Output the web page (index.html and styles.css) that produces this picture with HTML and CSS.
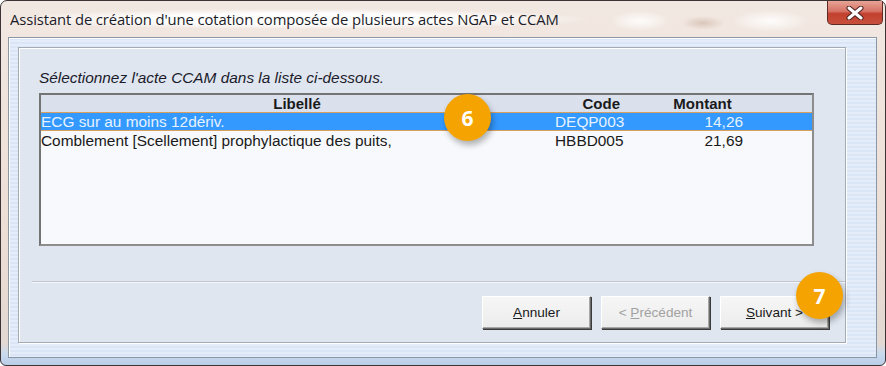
FILE: index.html
```html
<!DOCTYPE html>
<html lang="fr">
<head>
    <meta charset="UTF-8">
    <title>Assistant de création d'une cotation</title>
    <link rel="stylesheet" href="styles.css">
</head>
<body>
    <div class="window">
        <div class="titlebar">
            <span class="title">Assistant de création d'une cotation composée de plusieurs actes NGAP et CCAM</span>
            <div class="close">
                <svg width="20" height="14" viewBox="0 0 20 14">
                    <path d="M4 2 L16 12 M16 2 L4 12" stroke="#4a2020" stroke-width="5" stroke-linecap="round"/>
                    <path d="M4 2 L16 12 M16 2 L4 12" stroke="#ffffff" stroke-width="3" stroke-linecap="round"/>
                </svg>
            </div>
        </div>
        <div class="client">
            <div class="panel">
                <p class="prompt">Sélectionnez l'acte CCAM dans la liste ci-dessous.</p>
                <div class="list">
                    <div class="row header">
                        <span class="c-label">Libellé</span>
                        <span class="c-code">Code</span>
                        <span class="c-amount">Montant</span>
                    </div>
                    <div class="row selected">
                        <span class="c-label">ECG sur au moins 12dériv.</span>
                        <span class="c-code">DEQP003</span>
                        <span class="c-amount">14,26</span>
                    </div>
                    <div class="row">
                        <span class="c-label">Comblement [Scellement] prophylactique des puits,</span>
                        <span class="c-code">HBBD005</span>
                        <span class="c-amount">21,69</span>
                    </div>
                </div>
                <div class="separator"></div>
                <div class="buttons">
                    <div class="btn"><span><u>A</u>nnuler</span></div>
                    <div class="btn disabled"><span>&lt; <u>P</u>récédent</span></div>
                    <div class="btn"><span><u>S</u>uivant &gt;</span></div>
                </div>
            </div>
        </div>
        <div class="badge badge-6">6</div>
        <div class="badge badge-7">7</div>
    </div>
</body>
</html>
```

FILE: styles.css
```css
body {
    margin: 0;
    width: 886px;
    height: 366px;
    overflow: hidden;
    background: #ffffff;
    font-family: "Liberation Sans", Arial, sans-serif;
}
.window {
    position: relative;
    box-sizing: border-box;
    width: 886px;
    height: 366px;
    border: 1px solid #3c3434;
    border-radius: 7px 7px 6px 6px;
    padding: 0 8px 8px 7px;
    background: linear-gradient(to bottom, #f2e8e2 0%, #ecdfd6 60%, #e3d8d2 94%, #c9daee 97%, #b9cde6 100%);
}
.titlebar {
    height: 36px;
    display: flex;
    align-items: flex-start;
    justify-content: space-between;
    background:
        radial-gradient(ellipse 30px 10px at 632px 20px, rgba(255,255,255,0.9), rgba(255,255,255,0)),
        radial-gradient(ellipse 38px 11px at 762px 20px, rgba(255,255,255,0.9), rgba(255,255,255,0)),
        radial-gradient(ellipse 22px 7px at 695px 22px, rgba(190,160,140,0.45), rgba(190,160,140,0));
}
.title {
    margin: 8px 0 0 2px;
    font-family: "Open Sans", "Noto Sans", sans-serif;
    font-size: 14.8px;
    color: #1c1c28;
    background: radial-gradient(ellipse at center, rgba(255,255,255,0.95) 40%, rgba(255,255,255,0) 72%);
    padding: 0 30px 0 0;
    letter-spacing: -0.1px;
}
.close {
    width: 56px;
    height: 24px;
    margin-right: -6px;
    box-sizing: border-box;
    border: 1px solid #5e2a24;
    border-top: none;
    border-radius: 0 0 5px 5px;
    background: linear-gradient(to bottom, #e6a496 0%, #d57265 45%, #c2402e 55%, #c7503c 100%);
    display: flex;
    align-items: center;
    justify-content: center;
}
.client {
    box-sizing: border-box;
    height: 321px;
    border: 1px solid #8996a6;
    box-shadow: inset 1px 1px 0 #ffffff;
    background: repeating-linear-gradient(to bottom, #dae6f5 0, #dae6f5 2px, #e4edf9 2px, #e4edf9 4px);
    padding: 9px 30px 14px 9px;
}
.panel {
    box-sizing: border-box;
    height: 100%;
    border: 1px solid #a4abb4;
    box-shadow: inset 1px 1px 0 #ffffff, 1px 1px 0 #ffffff;
    background: #dfe6f0;
    padding: 0 0 0 20px;
}
.prompt {
    margin: 21px 0 0 0;
    font-size: 15.4px;
    font-style: italic;
    color: #1b1b2b;
    line-height: 18px;
}
.list {
    width: 775px;
    height: 153px;
    box-sizing: border-box;
    margin-top: 6px;
    border: 2px solid #747474;
    border-right-color: #8d8d8d;
    border-bottom-color: #8d8d8d;
    background: #f7f9fc;
    font-size: 15.4px;
    color: #1a1a1a;
}
.row {
    display: flex;
    height: 19px;
    line-height: 19px;
    white-space: nowrap;
}
.row.header {
    height: 17px;
    line-height: 17px;
    background: #dae1ed;
    font-weight: bold;
    font-size: 15px;
}
.c-label {
    width: 514px;
    overflow: hidden;
}
.header .c-label {
    text-align: center;
    padding-right: 2px;
    box-sizing: border-box;
}
.c-code {
    width: 70px;
    text-align: right;
    padding-right: 5px;
    box-sizing: border-box;
}
.c-amount {
    width: 155px;
    text-align: right;
    padding-right: 37px;
    box-sizing: border-box;
}
.header .c-amount {
    text-align: center;
    padding-right: 0;
}
.row.selected {
    background: #3399ff;
    color: #e6f2ff;
    box-shadow: inset 0 1px 0 #d8a060, inset 0 -1px 0 #d8a060;
}
.separator {
    margin: 35px 0 0 -7px;
    height: 1px;
    background: #c2c6cc;
    border-bottom: 1px solid #f4f7fb;
}
.buttons {
    display: flex;
    justify-content: flex-end;
    gap: 10px;
    margin: 13px 16px 0 0;
}
.btn {
    width: 109px;
    height: 33px;
    box-sizing: border-box;
    display: flex;
    align-items: center;
    justify-content: center;
    font-size: 13.6px;
    color: #1a1a1a;
    background: linear-gradient(to bottom, #f6f6f6 0%, #ececec 100%);
    border: 1px solid #ffffff;
    border-right-color: #6a6a6a;
    border-bottom-color: #6a6a6a;
    box-shadow: 1px 1px 0 #3a3a3a, inset -1px -1px 0 #a8a8a8;
}
.btn.disabled {
    color: #a2a2a2;
}
.badge {
    position: absolute;
    width: 47px;
    height: 47px;
    border-radius: 50%;
    background: #f5a300;
    color: #ffffff;
    font-family: "Open Sans", "Liberation Sans", sans-serif;
    font-weight: bold;
    font-size: 21px;
    display: flex;
    align-items: center;
    justify-content: center;
    box-shadow: 2px 4px 6px rgba(0, 0, 0, 0.3);
}
.badge-6 {
    left: 443px;
    top: 93px;
}
.badge-7 {
    left: 795px;
    top: 271px;
}
```
